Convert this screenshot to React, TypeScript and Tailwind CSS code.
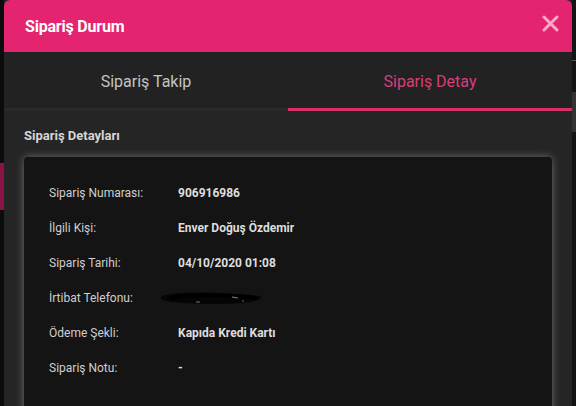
import React from 'react';

const rows: { label: string; value: string; redacted?: boolean }[] = [
  { label: 'Sipariş Numarası:', value: '906916986' },
  { label: 'İlgili Kişi:', value: 'Enver Doğuş Özdemir' },
  { label: 'Sipariş Tarihi:', value: '04/10/2020 01:08' },
  { label: 'İrtibat Telefonu:', value: '', redacted: true },
  { label: 'Ödeme Şekli:', value: 'Kapıda Kredi Kartı' },
  { label: 'Sipariş Notu:', value: '-' },
];

function Scribble() {
  return (
    <svg width="104" height="16" viewBox="0 0 104 16" className="-ml-[18px]">
      <path d="M2 6 C20 1 60 2 100 6 C103 8 98 12 80 13 C55 15 25 14 6 11 C0 9 0 7 2 6 Z" fill="#050505" />
      <path d="M10 8 C30 4 70 5 96 8" stroke="#000" strokeWidth="4" fill="none" />
      <line x1="36" y1="12" x2="40" y2="12" stroke="#777" strokeWidth="1" />
      <line x1="72" y1="7" x2="78" y2="8" stroke="#888" strokeWidth="1" />
      <line x1="82" y1="11" x2="84" y2="11" stroke="#666" strokeWidth="1" />
    </svg>
  );
}

export default function App() {
  return (
    <div className="w-[576px] h-[406px] overflow-hidden flex bg-[#0b0b0b]" style={{ fontFamily: 'Roboto, "Open Sans", sans-serif' }}>
      <div className="w-[4px] shrink-0 flex flex-col">
        <div className="h-[163px]" />
        <div className="h-[47px] bg-[#8a1443]" />
      </div>

      <div className="w-[568px] shrink-0 flex flex-col bg-[#252525] overflow-hidden">
        <div className="h-[52px] shrink-0 bg-[#e5246f] rounded-t-[6px] flex items-center justify-between pl-[21px] pr-[13px]">
          <span className="text-white font-bold text-[16px] tracking-[-0.2px] mt-[2px]">Sipariş Durum</span>
          <svg width="17" height="17" viewBox="0 0 17 17" className="-mt-[5px]">
            <path d="M2 2 L15 15 M15 2 L2 15" stroke="#f7a9c8" strokeWidth="3" strokeLinecap="round" />
          </svg>
        </div>

        <div className="h-[59px] shrink-0 bg-[#222222] flex">
          <div className="flex-1 flex items-center justify-center border-b-[3px] border-[#2a2a2a] pt-[4px]">
            <span className="text-[#c4c4c4] text-[16px]">Sipariş Takip</span>
          </div>
          <div className="flex-1 flex items-center justify-center border-b-[3px] border-[#d92f6d] pt-[4px]">
            <span className="text-[#dc3d78] text-[16px]">Sipariş Detay</span>
          </div>
        </div>

        <div className="px-[20px] pt-[16px] shrink-0">
          <div className="text-[#d6d6d6] font-bold text-[13px] leading-[18px]">Sipariş Detayları</div>
          <div className="mt-[12px] h-[260px] bg-[#141414] rounded-[4px] shadow-[0_0_8px_rgba(200,200,200,0.45)] pt-[18px] pl-[25px]">
            {rows.map((r) => (
              <div key={r.label} className="h-[35px] flex items-center text-[12px]">
                <span className="w-[129px] text-[#cfcfcf]">{r.label}</span>
                {r.redacted ? <Scribble /> : <span className="text-[#dedede] font-bold">{r.value}</span>}
              </div>
            ))}
          </div>
        </div>
      </div>

      <div className="w-[4px] shrink-0 flex flex-col bg-[#141414]">
        <div className="h-[60px]" />
        <div className="h-[32px] border-t border-[#555]" />
        <div className="h-[40px] bg-[#333]" />
      </div>
    </div>
  );
}
